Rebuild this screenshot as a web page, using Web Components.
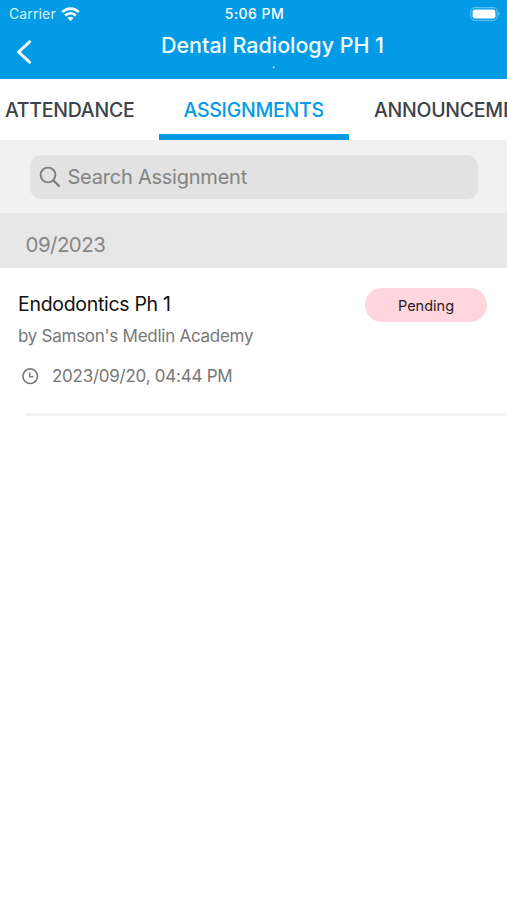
<!DOCTYPE html>
<html lang="en">
<head>
  <meta charset="UTF-8">
  <meta name="viewport" content="width=device-width, initial-scale=1.0">
  <title>Assignments</title>
  <style>
    html, body {
      margin: 0;
      height: 100%;
      overflow: hidden;
      background: #fff;
      font-family: Inter, "Liberation Sans", sans-serif;
    }
  </style>
</head>
<body>
  <app-screen>
    <status-bar slot="top" carrier="Carrier" time="5:06 PM"></status-bar>
    <nav-header slot="top">Dental Radiology PH 1<span slot="subtitle">.</span></nav-header>
    <tab-bar slot="top">
      <tab-item style="--w: 159px; --pad: 5px">ATTENDANCE</tab-item>
      <tab-item active style="--w: 190px; --pad: 24.5px">ASSIGNMENTS</tab-item>
      <tab-item style="--w: 240px; --pad: 25px">ANNOUNCEMENTS</tab-item>
    </tab-bar>
    <search-field>Search Assignment</search-field>
    <month-header>09/2023</month-header>
    <assignment-item>
      Endodontics Ph 1
      <span slot="author">by Samson's Medlin Academy</span>
      <span slot="date">2023/09/20, 04:44 PM</span>
      <status-badge slot="status">Pending</status-badge>
    </assignment-item>
  </app-screen>

  <script>
    class AppScreen extends HTMLElement {
      constructor() {
        super();
        this.attachShadow({ mode: "open" });
      }

      connectedCallback() {
        this.shadowRoot.innerHTML = `
          <style>
            :host {
              display: flex;
              flex-direction: column;
              width: 100%;
              height: 100%;
              overflow: hidden;
              background: #fff;
            }
          </style>
          <slot name="top"></slot>
          <slot></slot>
        `;
      }
    }

    class StatusBar extends HTMLElement {
      constructor() {
        super();
        this.attachShadow({ mode: "open" });
      }

      connectedCallback() {
        this.shadowRoot.innerHTML = `
          <style>
            :host {
              display: grid;
              grid-template-columns: 1fr auto 1fr;
              align-items: center;
              flex: none;
              height: 28px;
              padding: 0 7px 0 9px;
              box-sizing: border-box;
              background: #039be5;
              color: #fff;
              font-size: 14px;
              line-height: 28px;
            }
            .carrier {
              display: flex;
              align-items: center;
              gap: 5.5px;
              color: #d9f3ff;
              letter-spacing: 0.13px;
            }
            .time {
              font-weight: 550;
              font-size: 14px;
              letter-spacing: 0.45px;
            }
            .battery {
              justify-self: end;
            }
            svg {
              display: block;
            }
          </style>
          <div class="carrier">
            <span>${this.getAttribute("carrier")}</span>
            <svg width="19" height="15" viewBox="0 0 19 15" fill="none" stroke="#fff" stroke-width="2.7">
              <path d="M1.2 5.1C5.9 0.5 13.1 0.5 17.8 5.1"/>
              <path d="M4.2 8.6C7.3 5.7 11.7 5.7 14.8 8.6"/>
              <path d="M9.5 14L6.5 11C8.2 9.3 10.8 9.3 12.5 11Z" fill="#fff" stroke="none"/>
            </svg>
          </div>
          <span class="time">${this.getAttribute("time")}</span>
          <svg class="battery" width="30" height="14" viewBox="0 0 30 14">
            <rect x="0.8" y="0.7" width="26.4" height="12.6" rx="4" fill="none" stroke="#5bbdf0" stroke-width="1.2"/>
            <rect x="2.6" y="2.4" width="22.8" height="9.2" rx="2.3" fill="#fff"/>
            <path d="M28.4 4.8C30.2 5.4 30.2 8.6 28.4 9.2Z" fill="#5bbdf0"/>
          </svg>
        `;
      }
    }

    class NavHeader extends HTMLElement {
      constructor() {
        super();
        this.attachShadow({ mode: "open" });
      }

      connectedCallback() {
        this.shadowRoot.innerHTML = `
          <style>
            :host {
              display: grid;
              grid-template-columns: 38px 1fr;
              flex: none;
              height: 51px;
              box-sizing: border-box;
              background: #039be5;
              color: #f1fbff;
            }
            .back {
              display: block;
              margin: 12px 0 0 16px;
            }
            .titles {
              display: flex;
              flex-direction: column;
              align-items: center;
              padding: 3px 0 0;
            }
            .title {
              font-size: 21.5px;
              font-weight: 540;
              letter-spacing: -0.05px;
              line-height: 28px;
              white-space: nowrap;
            }
            .subtitle {
              padding-left: 2px;
              font-size: 9px;
              font-weight: 700;
              line-height: 11px;
            }
          </style>
          <svg class="back" width="16" height="24" viewBox="0 0 16 24" fill="none" stroke="#f1fbff" stroke-width="3" stroke-linecap="round" stroke-linejoin="round">
            <path d="M13.6 1.8L2.6 12L13.6 22.2"/>
          </svg>
          <div class="titles">
            <div class="title"><slot></slot></div>
            <div class="subtitle"><slot name="subtitle"></slot></div>
          </div>
        `;
      }
    }

    class TabBar extends HTMLElement {
      constructor() {
        super();
        this.attachShadow({ mode: "open" });
      }

      connectedCallback() {
        this.shadowRoot.innerHTML = `
          <style>
            /* the last tab runs past the right edge, the bar scrolls sideways */
            :host {
              display: flex;
              flex: none;
              height: 61px;
              overflow-x: auto;
              overflow-y: hidden;
              scrollbar-width: none;
              background: #fff;
            }
          </style>
          <slot></slot>
        `;
      }
    }

    class TabItem extends HTMLElement {
      constructor() {
        super();
        this.attachShadow({ mode: "open" });
      }

      connectedCallback() {
        this.shadowRoot.innerHTML = `
          <style>
            :host {
              flex: none;
              width: var(--w);
              height: 61px;
              padding-left: var(--pad);
              box-sizing: border-box;
              border-bottom: 6px solid transparent;
              color: #3c4349;
              font-size: 19.5px;
              font-weight: 550;
              letter-spacing: -0.27px;
              line-height: 62px;
              white-space: nowrap;
            }
            :host([active]) {
              color: #039be5;
              border-bottom-color: #039be5;
            }
          </style>
          <slot></slot>
        `;
      }
    }

    class SearchField extends HTMLElement {
      constructor() {
        super();
        this.attachShadow({ mode: "open" });
      }

      connectedCallback() {
        this.shadowRoot.innerHTML = `
          <style>
            :host {
              display: block;
              flex: none;
              height: 73px;
              padding: 15px 29px 0 30px;
              box-sizing: border-box;
              background: #f1f1f1;
            }
            .field {
              display: flex;
              align-items: center;
              gap: 6.5px;
              height: 44px;
              padding-left: 9px;
              border-radius: 11px;
              background: #e2e2e2;
              color: #838383;
              font-size: 20px;
              letter-spacing: -0.23px;
            }
          </style>
          <div class="field">
            <svg width="22" height="22" viewBox="0 0 22 22" fill="none" stroke="#808080" stroke-width="1.9" stroke-linecap="round">
              <circle cx="9" cy="9" r="7.4"/>
              <path d="M14.4 14.4L20 20" stroke-width="2.3"/>
            </svg>
            <span><slot></slot></span>
          </div>
        `;
      }
    }

    class MonthHeader extends HTMLElement {
      constructor() {
        super();
        this.attachShadow({ mode: "open" });
      }

      connectedCallback() {
        this.shadowRoot.innerHTML = `
          <style>
            :host {
              display: block;
              flex: none;
              height: 55px;
              padding-left: 25.5px;
              box-sizing: border-box;
              background: #e7e7e7;
              color: #868686;
              font-size: 20.5px;
              letter-spacing: -0.55px;
              line-height: 63px;
            }
          </style>
          <slot></slot>
        `;
      }
    }

    class AssignmentItem extends HTMLElement {
      constructor() {
        super();
        this.attachShadow({ mode: "open" });
      }

      connectedCallback() {
        this.shadowRoot.innerHTML = `
          <style>
            :host {
              display: flex;
              flex-direction: column;
              flex: none;
            }
            .row {
              display: flex;
              justify-content: space-between;
              padding: 20px 20px 0 18px;
            }
            .title {
              padding-top: 1px;
              color: #111;
              font-size: 19.5px;
              font-weight: 430;
              letter-spacing: -0.3px;
              line-height: 31px;
            }
            .author {
              color: #777;
              font-size: 17px;
              letter-spacing: -0.27px;
              line-height: 32px;
            }
            .date {
              display: flex;
              align-items: center;
              gap: 13px;
              height: 32px;
              margin: 8px 0 0 22px;
              color: #777;
              font-size: 17px;
              letter-spacing: -0.25px;
            }
            .line {
              height: 3px;
              margin: 21px 0 0 25px;
              background: #f4f4f4;
            }
          </style>
          <div class="row">
            <div>
              <div class="title"><slot></slot></div>
              <div class="author"><slot name="author"></slot></div>
            </div>
            <slot name="status"></slot>
          </div>
          <div class="date">
            <svg width="17" height="17" viewBox="0 0 17 17" fill="none" stroke="#7d7d7d">
              <circle cx="8.2" cy="8.2" r="7.3" stroke-width="1.7"/>
              <path d="M7.7 4.6V8.8H11.4" stroke-width="1.4"/>
            </svg>
            <slot name="date"></slot>
          </div>
          <div class="line"></div>
        `;
      }
    }

    class StatusBadge extends HTMLElement {
      constructor() {
        super();
        this.attachShadow({ mode: "open" });
      }

      connectedCallback() {
        this.shadowRoot.innerHTML = `
          <style>
            :host {
              display: flex;
              align-items: center;
              justify-content: center;
              width: 122px;
              height: 34px;
              border-radius: 17px;
              background: #ffd6dd;
              color: #2b1c1f;
              font-size: 14.5px;
            }
          </style>
          <slot></slot>
        `;
      }
    }

    customElements.define("app-screen", AppScreen);
    customElements.define("status-bar", StatusBar);
    customElements.define("nav-header", NavHeader);
    customElements.define("tab-bar", TabBar);
    customElements.define("tab-item", TabItem);
    customElements.define("search-field", SearchField);
    customElements.define("month-header", MonthHeader);
    customElements.define("assignment-item", AssignmentItem);
    customElements.define("status-badge", StatusBadge);
  </script>
</body>
</html>
